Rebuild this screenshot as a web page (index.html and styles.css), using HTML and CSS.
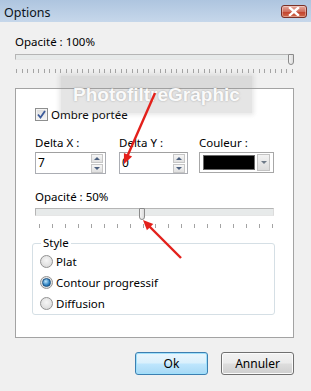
FILE: index.html
```html
<!DOCTYPE html>
<html lang="fr">
<head>
    <meta charset="UTF-8">
    <meta name="viewport" content="width=device-width, initial-scale=1.0">
    <title>Options</title>
    <link rel="stylesheet" href="styles.css">
</head>
<body>
    <div class="window">
        <div class="titlebar">
            <span class="titlebar__title">Options</span>
            <span class="titlebar__close">
                <svg width="12" height="9" viewBox="0 0 12 9">
                    <path d="M2 1 L10 8 M10 1 L2 8" stroke="#fff" stroke-width="2.4" stroke-linecap="square"/>
                </svg>
            </span>
        </div>

        <div class="window__body">
            <div class="label">Opacité : 100%</div>
            <div class="slider">
                <div class="slider__track"></div>
                <div class="slider__thumb" style="left: 273px"></div>
            </div>
            <div class="ticks ticks--dense"></div>

            <div class="panel">
                <label class="check">
                    <span class="check__box">
                        <svg width="9" height="9" viewBox="0 0 9 9">
                            <path d="M1 4.5 L3.5 7.5 L8 1" fill="none" stroke="#3b5a9a" stroke-width="1.8"/>
                        </svg>
                    </span>
                    Ombre portée
                </label>

                <div class="fields">
                    <div class="field field--x">
                        <div class="label">Delta X :</div>
                        <div class="spin">
                            <span class="spin__value">7</span>
                            <span class="spin__buttons">
                                <span class="spin__btn"><span class="tri tri--up"></span></span>
                                <span class="spin__btn"><span class="tri tri--down"></span></span>
                            </span>
                        </div>
                    </div>
                    <div class="field field--y">
                        <div class="label">Delta Y :</div>
                        <div class="spin">
                            <span class="spin__value">0</span>
                            <span class="spin__buttons">
                                <span class="spin__btn"><span class="tri tri--up"></span></span>
                                <span class="spin__btn"><span class="tri tri--down"></span></span>
                            </span>
                        </div>
                    </div>
                    <div class="field field--color">
                        <div class="label">Couleur :</div>
                        <div class="combo">
                            <span class="combo__swatch"></span>
                            <span class="combo__btn"><span class="tri tri--down"></span></span>
                        </div>
                    </div>
                </div>

                <div class="label label--opacity">Opacité : 50%</div>
                <div class="slider slider--inner">
                    <div class="slider__track"></div>
                    <div class="slider__thumb" style="left: 104px"></div>
                </div>
                <div class="ticks ticks--sparse"></div>

                <fieldset class="group">
                    <legend class="group__legend">Style</legend>
                    <label class="radio"><span class="radio__dot"></span>Plat</label>
                    <label class="radio"><span class="radio__dot radio__dot--on"></span>Contour progressif</label>
                    <label class="radio"><span class="radio__dot"></span>Diffusion</label>
                </fieldset>
            </div>

            <div class="buttons">
                <button class="btn btn--default">Ok</button>
                <button class="btn">Annuler</button>
            </div>
        </div>

        <div class="watermark">PhotofiltreGraphic</div>

        <svg class="arrows" width="311" height="391" viewBox="0 0 311 391">
            <line x1="155" y1="93" x2="127" y2="157" stroke="#e3201b" stroke-width="2.4"/>
            <polygon points="124,164 132.1,156.6 123.9,153" fill="#e3201b"/>
            <line x1="181" y1="258" x2="149" y2="226" stroke="#e3201b" stroke-width="2.4"/>
            <polygon points="143,220 153.3,223.9 146.9,230.3" fill="#e3201b"/>
        </svg>
    </div>
</body>
</html>
```

FILE: styles.css
```css
* { box-sizing: border-box; }

body {
  margin: 0;
  background: #f0f0f0;
  font-family: "Segoe UI", "Noto Sans", sans-serif;
  font-size: 11.5px;
  color: #000;
}

.window {
  position: relative;
  width: 311px;
  height: 391px;
  overflow: hidden;
}

/* ---------- title bar ---------- */

.titlebar {
  height: 22px;
  display: flex;
  align-items: center;
  justify-content: space-between;
  padding: 0 4px 0 4px;
  background: linear-gradient(#aec5df, #c6d7ea);
}

.titlebar__title {
  font-size: 12.5px;
  color: #0c1420;
  padding-top: 2px;
}

.titlebar__close {
  width: 26px;
  height: 13px;
  display: flex;
  align-items: center;
  justify-content: center;
  border: 1px solid #7a3026;
  border-radius: 3px;
  background: linear-gradient(#e6a89c, #d0705f 50%, #c2432e 55%, #d06a4c);
  box-shadow: inset 0 0 0 1px rgba(255,255,255,0.35);
}

/* ---------- body ---------- */

.window__body {
  padding: 12px 17px 0 15px;
}

.label {
  line-height: 16px;
  height: 16px;
}

.slider {
  position: relative;
  height: 11px;
  margin-top: 4px;
}

.slider__track {
  margin-top: 3px;
  height: 6px;
  border: 1px solid #b5b5b5;
  border-right-color: #dcdcdc;
  border-bottom-color: #e6e6e6;
  background: #e7eaea;
}

.slider__thumb {
  position: absolute;
  top: 0;
  width: 6px;
  height: 11px;
  border: 1px solid #8a8a8a;
  border-radius: 1px 1px 3px 3px;
  background: linear-gradient(to right, #f4f4f4, #dcdcdc);
}

.ticks {
  height: 4px;
  margin-top: 4px;
}

.ticks--dense {
  width: 277px;
  margin-left: 1px;
  background: repeating-linear-gradient(to right, #a4a4a4 0 1px, transparent 1px 5.52px);
}

.ticks--sparse {
  width: 234px;
  margin-left: 4px;
  background: repeating-linear-gradient(to right, #a4a4a4 0 1px, transparent 1px 12.94px);
}

/* ---------- panel ---------- */

.panel {
  margin-top: 15px;
  height: 250px;
  border: 1px solid #a3a3a3;
  background: #fff;
  padding: 19px 19px 0 19px;
}

.check {
  display: flex;
  align-items: center;
  gap: 3px;
  height: 13px;
  line-height: 13px;
}

.check__box {
  width: 13px;
  height: 13px;
  display: flex;
  align-items: center;
  justify-content: center;
  border: 1px solid #8e8f8f;
  background: linear-gradient(#dcdcdc, #f6f6f6);
  box-shadow: inset 0 0 0 1px #f4f4f4;
}

.fields {
  display: flex;
  margin-top: 14px;
}

.field--x { width: 71px; margin-right: 13px; }
.field--y { width: 69px; margin-right: 11px; }
.field--color { width: 75px; }

.spin {
  margin-top: 1px;
  height: 22px;
  display: flex;
  justify-content: space-between;
  border: 1px solid #abadb3;
  border-top-color: #a0a0a0;
  background: #fff;
}

.spin__value {
  padding-left: 2px;
  line-height: 20px;
  font-size: 12px;
}

.spin__buttons {
  display: flex;
  flex-direction: column;
  justify-content: center;
  gap: 1px;
  padding: 0 1px;
  margin-right: 1px;
}

.spin__btn {
  width: 12px;
  height: 9px;
  display: flex;
  align-items: center;
  justify-content: center;
  border: 1px solid #c6c6c6;
  background: linear-gradient(#f6f6f6, #e0e0e0);
}

.tri {
  width: 0;
  height: 0;
  border-left: 3px solid transparent;
  border-right: 3px solid transparent;
}

.tri--up { border-bottom: 3px solid #4c607f; }
.tri--down { border-top: 3px solid #4c607f; }

.combo {
  margin-top: 1px;
  height: 21px;
  display: flex;
  align-items: center;
  gap: 2px;
  padding: 0 3px;
  border: 1px solid #a7a7a7;
  background: #fff;
}

.combo__swatch {
  width: 52px;
  height: 15px;
  background: #000;
  border: 1px solid #6a6a6a;
}

.combo__btn {
  width: 13px;
  height: 17px;
  display: flex;
  align-items: center;
  justify-content: center;
  border: 1px solid #c3c3c3;
  background: linear-gradient(#f3f3f3, #dcdcdc);
}

.combo__btn .tri--down { border-top-color: #6e7a88; }

.label--opacity {
  margin-top: 15px;
}

.slider--inner {
  margin-top: 0;
  height: 12px;
}

.slider--inner .slider__track {
  height: 8px;
}

.slider--inner .slider__thumb {
  height: 12px;
}

.slider--inner + .ticks {
  margin-top: 4px;
}

/* ---------- group box ---------- */

.group {
  margin: 8px 0 0 -3px;
  width: 243px;
  height: 79px;
  border: 1px solid #d5dfe5;
  border-radius: 3px;
  padding: 5px 0 0 7px;
}

.group__legend {
  padding: 0 2px;
  margin-left: 1px;
  line-height: 14px;
}

.radio {
  display: flex;
  align-items: center;
  gap: 3px;
  height: 13px;
  line-height: 13px;
  margin-bottom: 8px;
}

.radio__dot {
  width: 13px;
  height: 13px;
  border-radius: 50%;
  border: 1px solid #929292;
  background: radial-gradient(circle at 50% 40%, #f6f6f6, #d4d4d4);
  display: flex;
  align-items: center;
  justify-content: center;
}

.radio__dot--on::after {
  content: "";
  width: 7px;
  height: 7px;
  border-radius: 50%;
  border: 1px solid #1c5180;
  background: radial-gradient(circle at 40% 35%, #bfe6fb, #2a7fc0 60%, #1a5a93);
}

/* ---------- buttons ---------- */

.buttons {
  display: flex;
  justify-content: flex-end;
  gap: 13px;
  margin-top: 14px;
}

.btn {
  width: 73px;
  height: 23px;
  font-family: inherit;
  font-size: 12px;
  color: #000;
  border: 1px solid #707070;
  border-radius: 3px;
  background: linear-gradient(#f2f2f2, #ebebeb 48%, #dddddd 52%, #cfcfcf);
  box-shadow: inset 0 0 0 1px #fbfbfb;
  padding: 0;
}

.btn--default {
  border-color: #3c7fb1;
  background: linear-gradient(#eaf6fd, #d9f0fc 48%, #bee6fd 52%, #a7d9f5);
  box-shadow: inset 0 0 0 1px #9fe0fb;
}

/* ---------- overlays ---------- */

.watermark {
  position: absolute;
  left: 61px;
  top: 76px;
  width: 191px;
  height: 37px;
  display: flex;
  align-items: center;
  justify-content: center;
  background: rgba(150, 150, 150, 0.25);
  box-shadow: 0 0 4px 2px rgba(150, 150, 150, 0.22);
  font-family: "Liberation Sans", Arial, sans-serif;
  font-weight: bold;
  font-size: 19px;
  color: rgba(255, 255, 255, 0.95);
  text-shadow: 0 0 2px rgba(120, 120, 120, 0.6);
}

.arrows {
  position: absolute;
  left: 0;
  top: 0;
  pointer-events: none;
}
```
